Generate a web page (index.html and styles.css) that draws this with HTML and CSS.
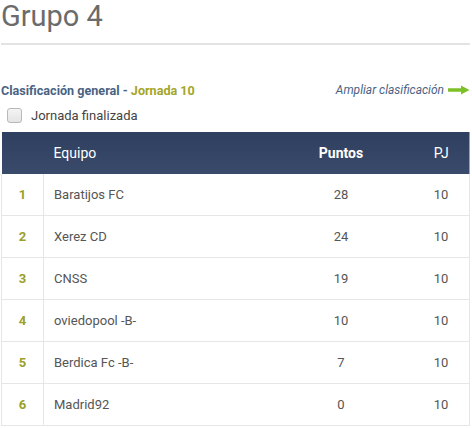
FILE: index.html
```html
<!DOCTYPE html>
<html lang="es">
<head>
<meta charset="utf-8">
<link rel="stylesheet" href="styles.css">
</head>
<body>
<div class="page">
  <h1 class="title">Grupo 4</h1>
  <div class="bar">
    <div class="subtitle">Clasificación general - <span class="jornada">Jornada 10</span></div>
    <a class="more">Ampliar clasificación
      <svg class="arrow" width="22" height="10" viewBox="0 0 22 10"><path d="M0 3.2h13V0.5L21.5 5 13 9.5V6.8H0z" fill="#7ec028"/></svg>
    </a>
  </div>
  <label class="check"><span class="box"></span>Jornada finalizada</label>
  <table class="standings">
    <thead>
      <tr><th class="pos"></th><th class="team">Equipo</th><th class="pts">Puntos</th><th class="pj">PJ</th></tr>
    </thead>
    <tbody>
      <tr><td class="pos">1</td><td class="team">Baratijos FC</td><td class="pts">28</td><td class="pj">10</td></tr>
      <tr><td class="pos">2</td><td class="team">Xerez CD</td><td class="pts">24</td><td class="pj">10</td></tr>
      <tr><td class="pos">3</td><td class="team">CNSS</td><td class="pts">19</td><td class="pj">10</td></tr>
      <tr><td class="pos">4</td><td class="team">oviedopool -B-</td><td class="pts">10</td><td class="pj">10</td></tr>
      <tr><td class="pos">5</td><td class="team">Berdica Fc -B-</td><td class="pts">7</td><td class="pj">10</td></tr>
      <tr><td class="pos">6</td><td class="team">Madrid92</td><td class="pts">0</td><td class="pj">10</td></tr>
    </tbody>
  </table>
</div>
</body>
</html>
```
FILE: styles.css
```css
html, body { margin: 0; padding: 0; background: #fff; }
body { font-family: Roboto, "Noto Sans", Arial, sans-serif; color: #555; }
.page { width: 469px; margin-left: 1px; }
.title {
  margin: 0;
  font-size: 29px;
  font-weight: 400;
  color: #6b6b6b;
  line-height: 33px;
  padding-bottom: 10px;
  border-bottom: 2px solid #e3e3e3;
}
.bar {
  display: flex;
  justify-content: space-between;
  align-items: center;
  margin-top: 37px;
  height: 16px;
}
.subtitle { font-size: 12.6px; font-weight: 700; color: #4a6384; }
.jornada { color: #a4a52a; }
.more {
  font-size: 12px;
  font-style: italic;
  color: #4a6384;
  display: flex;
  align-items: center;
  gap: 4px;
  margin-right: 0;
}
.check {
  display: flex;
  align-items: center;
  margin-top: 8px;
  margin-left: 6px;
  font-size: 13px;
  color: #444;
  height: 18px;
}
.box {
  width: 13px; height: 13px;
  border: 1px solid #b9b9b9;
  border-radius: 3px;
  background: linear-gradient(#f4f4f4, #e4e4e4);
  margin-right: 9px;
}
.standings {
  width: 469px;
  margin-top: 8px;
  border-collapse: collapse;
  font-size: 13px;
}
.standings thead tr {
  background: linear-gradient(#2f3f5f, #3a4a6a);
}
.standings th {
  height: 42px;
  padding: 0;
  color: #fff;
  font-weight: 400;
  font-size: 14px;
  text-align: left;
}
.standings th.pts { font-weight: 700; text-align: center; }
.standings th.pj { text-align: center; }
.standings td {
  height: 41px;
  padding: 0;
  border-bottom: 1px solid #e6e6e6;
  color: #555;
}
.standings td.pos {
  width: 41px;
  text-align: center;
  font-weight: 700;
  color: #9aa02a;
  border-left: 1px solid #e6e6e6;
  border-right: 1px solid #e6e6e6;
}
.standings td.team, .standings th.team { padding-left: 10px; }
.standings .pts { width: 144px; text-align: center; }
.standings .pj { width: 56px; text-align: center; }
.standings td.pj { border-right: 1px solid #e6e6e6; }
```
